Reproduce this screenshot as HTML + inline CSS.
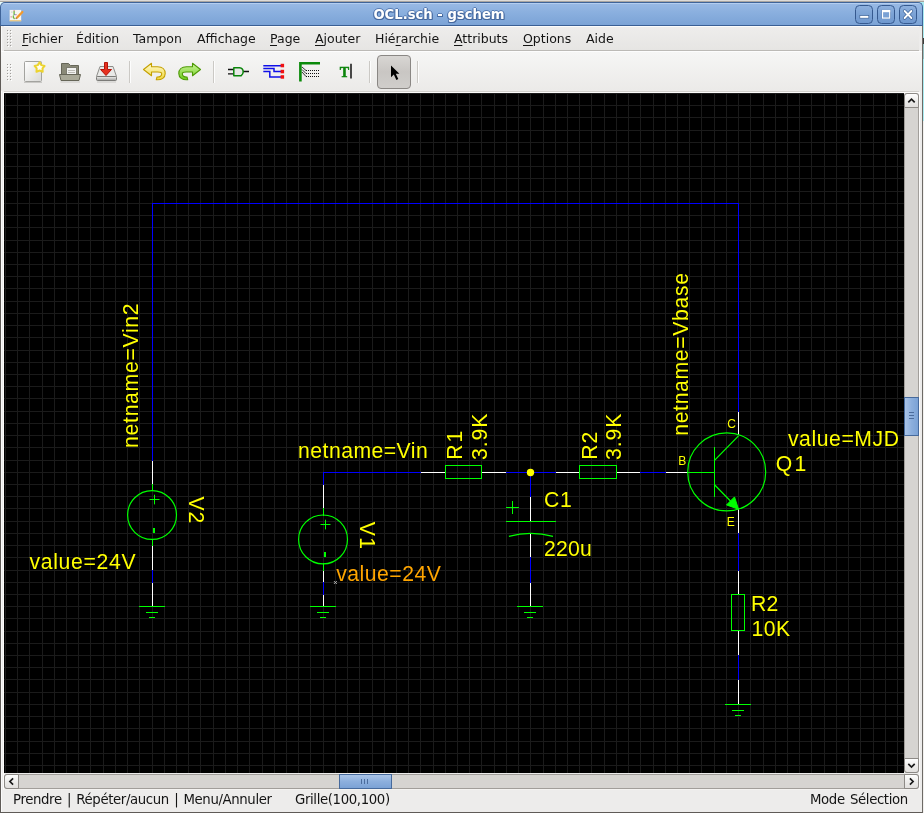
<!DOCTYPE html>
<html><head><meta charset="utf-8"><title>OCL.sch - gschem</title>
<style>
*{box-sizing:border-box;margin:0;padding:0}
html,body{width:924px;height:813px;overflow:hidden;background:#edeceb}
body{position:relative;font-family:"DejaVu Sans","Liberation Sans",sans-serif;font-size:12.5px;color:#141414}
#root{position:absolute;left:0;top:0;width:924px;height:813px;will-change:transform}
.abs{position:absolute}
#topstrip{left:0;top:0;width:924px;height:2px;background:linear-gradient(#dddbd8 0,#dddbd8 50%,#a9a5a0 50%,#a9a5a0 100%)}
#deskL{left:0;top:2px;width:8px;height:8px;background:#e8fdfd}
#deskR{left:918px;top:2px;width:6px;height:119px;background:#a9ecf2}
#rightbg{left:923px;top:121px;width:1px;height:692px;background:#f1f0ee}
#win{left:0;top:20px;width:923px;height:793px;background:#edeceb;border-left:1px solid #5f5b57;border-right:1px solid #6d6a66;border-bottom:1px solid #5f5b57;box-shadow:inset 1px 0 0 #fafafa}
#title{left:0;top:2px;width:923px;height:24px;border-radius:5px 5px 0 0;background:linear-gradient(#b4cef0 0,#b4cef0 1px,#98b9e4 1px,#8bb0df 40%,#7ba3d6 100%);border:1px solid #3f6499;border-bottom-color:#3a5f94}
#title .t{left:-23.5px;width:923px;top:4px;text-align:center;color:#fff;font-weight:bold;font-size:13.2px;text-shadow:0 1px 0 #46699f,1px 1px 0 #46699f,1px 0 0 #4d71a8,-1px 0 0 #5579b0,0 -1px 0 #5a7eb4,-1px 1px 0 #4d71a8}
.wb{top:2px;width:18px;height:19px;border:1px solid #35598f;border-radius:4.5px;background:linear-gradient(#8db0de,#7ba2d5 50%,#6f98cf)}
#menubar{left:4px;top:26px;width:915px;height:25px;background:linear-gradient(#eeedec,#e6e5e3);border-top:1px solid #fbfbfb;border-bottom:1px solid #bcbab6}
#menubar span{position:absolute;top:4px;white-space:nowrap}
#menubar u{text-decoration:underline;text-underline-offset:2px;text-decoration-thickness:1px}
#toolbar{left:1px;top:51px;width:921px;height:40px;background:linear-gradient(#f6f6f5,#ebeae8);border-top:1px solid #fdfdfd}
#tbline{left:4px;top:91px;width:915px;height:2px;background:#d2d0cc;border-bottom:1px solid #fbfbfa}
.sep{width:2px;height:22px;top:61px;background:#cbc9c5;border-right:1px solid #fdfdfd}
#canvas{left:4px;top:93px}
.trough{background:#d6d4d1;border:1px solid #a19e9a}
.sbtn{background:linear-gradient(#fefefe,#ebeae8 60%,#e2e0de);border:1px solid #8d8a86}
.thumb{background:linear-gradient(90deg,#a9c4e8,#8cafdd 50%,#7ba2d5);border:1px solid #466a9c}
.thumbh{background:linear-gradient(#a9c4e8,#8cafdd 50%,#7ba2d5);border:1px solid #466a9c}
#status span{position:absolute;top:792px;white-space:nowrap;font-size:13.3px;letter-spacing:-0.38px;word-spacing:1.4px}
</style></head><body><div id="root">
<div id="topstrip" class="abs"></div>
<div id="deskR" class="abs"></div>
<div id="deskL" class="abs"></div>
<div id="rightbg" class="abs"></div>
<div id="win" class="abs"></div>
<div id="title" class="abs">
  <svg class="abs" style="left:7px;top:6px" width="17" height="14" viewBox="0 0 17 14"><g transform="translate(0.6,0.4)"><rect x="0.300" y="1" width="12.600" height="12" fill="#7f9fcd" opacity="0.500"/><rect x="1" y="0.500" width="11.600" height="11.300" fill="#f6f6f3"/><rect x="1" y="10.800" width="11.600" height="1.100" fill="#e9c274"/><path d="M5.500 2V5M4.700 6.500Q4.300 8 5.600 9.200" stroke="#6fb53e" stroke-width="1.300" fill="none" stroke-linecap="round"/><path d="M5 1.300H6M2 7.500H3.200M7 5.300H8" stroke="#d9556a" stroke-width="0.900"/><path d="M5.500 5.300H7" stroke="#6a78c8" stroke-width="0.900"/><path d="M3.300 2V3.500" stroke="#b9b9b9" stroke-width="0.700"/><path d="M8.300 8.300L13.800 2.600" stroke="#f39a2c" stroke-width="2.300" stroke-linecap="round"/><path d="M7.100 9.500L8 8.500" stroke="#8a7a66" stroke-width="1.100"/></g></svg>
  <div class="abs t">OCL.sch - gschem</div>
  <div class="abs wb" style="left:854px"><svg width="16" height="17"><rect x="3.800" y="9.600" width="9" height="2.600" fill="#fff" stroke="#3f6499" stroke-width="0.7"/></svg></div>
  <div class="abs wb" style="left:876px"><svg width="16" height="17"><rect x="3.6" y="3.800" width="9" height="9" fill="#416aa3"/><rect x="4.500" y="4.500" width="7.200" height="7.600" fill="#7aa1d4" stroke="#fff" stroke-width="1.2"/><rect x="4" y="4" width="8.200" height="2.200" fill="#fff"/></svg></div>
  <div class="abs wb" style="left:898px"><svg width="16" height="17"><path d="M4.600 5L11.400 12M11.400 5L4.600 12" stroke="#3f6499" stroke-width="3.300" stroke-linecap="round"/><path d="M4.600 5L11.400 12M11.400 5L4.600 12" stroke="#fff" stroke-width="1.900" stroke-linecap="round"/></svg></div>
</div>
<div id="menubar" class="abs">
  <span style="left:18px"><u>F</u>ichier</span>
  <span style="left:72px">Édition</span>
  <span style="left:129px">Tampon</span>
  <span style="left:193px">Affichage</span>
  <span style="left:266px"><u>P</u>age</span>
  <span style="left:311px"><u>A</u>jouter</span>
  <span style="left:371px">Hié<u>r</u>archie</span>
  <span style="left:450px"><u>A</u>ttributs</span>
  <span style="left:519px"><u>O</u>ptions</span>
  <span style="left:582px">Aide</span>
</div>
<div id="toolbar" class="abs"></div>
<div id="tbline" class="abs"></div>
<div class="abs" style="left:3px;top:92px;width:917px;height:698px;border:1px solid #fcfbfa;border-bottom-color:#f4f3f1"></div>
<div class="abs" style="left:923px;top:38px;width:1px;height:6px;background:#3a3a3a"></div>
<div class="abs" style="left:923px;top:44px;width:1px;height:15px;background:#97c2c4"></div>
<!-- grips -->
<svg class="abs" style="left:4px;top:26px" width="12" height="60" viewBox="4 26 12 60">
  <g id="gd"><rect x="7" y="30" width="1" height="1" fill="#9f9d9a"/><rect x="8" y="31" width="1" height="1" fill="#fff"/><rect x="10" y="30" width="1" height="1" fill="#9f9d9a"/><rect x="11" y="31" width="1" height="1" fill="#fff"/></g>
  <use href="#gd" y="3"/><use href="#gd" y="6"/><use href="#gd" y="9"/><use href="#gd" y="12"/><use href="#gd" y="15"/>
  <use href="#gd" y="34"/><use href="#gd" y="37"/><use href="#gd" y="40"/><use href="#gd" y="43"/><use href="#gd" y="46"/><use href="#gd" y="49"/>
</svg>
<!-- toolbar icons -->
<svg class="abs" style="left:0;top:51px" width="440" height="41" viewBox="0 51 440 41">
  <defs>
    <linearGradient id="pg" x1="0" y1="0" x2="1" y2="1"><stop offset="0" stop-color="#fff"/><stop offset="1" stop-color="#d9d9d6"/></linearGradient>
    <linearGradient id="dr" x1="0" y1="0" x2="0" y2="1"><stop offset="0" stop-color="#f0f0ee"/><stop offset="1" stop-color="#a2a2a0"/></linearGradient>
    <linearGradient id="yl" x1="0" y1="0" x2="0" y2="1"><stop offset="0" stop-color="#fffbd2"/><stop offset="1" stop-color="#f1d83c"/></linearGradient>
    <linearGradient id="gr" x1="0" y1="0" x2="0" y2="1"><stop offset="0" stop-color="#cdf59c"/><stop offset="1" stop-color="#6ccb1c"/></linearGradient>
    <linearGradient id="pb" x1="0" y1="0" x2="0" y2="1"><stop offset="0" stop-color="#d9d7d4"/><stop offset="0.5" stop-color="#c9c6c3"/><stop offset="1" stop-color="#d0cecb"/></linearGradient>
  </defs>
  <!-- new -->
  <path d="M25.500 61.500H40.500Q41.500 61.500 41.500 62.500V80.500Q41.500 81.500 40.500 81.500H25.500Q24.500 81.500 24.500 80.500V62.500Q24.500 61.500 25.500 61.500Z" fill="url(#pg)" stroke="#a3a39f"/>
  <path d="M24 82.500H42" stroke="#c9c8c5" stroke-width="1"/>
  <path d="M39.6 62.2L41.4 65.1L44.6 65.9L42.5 68.4L42.7 71.8L39.6 70.5L36.5 71.8L36.7 68.4L34.6 65.9L37.8 65.1Z" fill="#fffef2" stroke="#ecd430" stroke-width="2" stroke-linejoin="round"/>
  <!-- open -->
  <path d="M61.500 63.500H68.500L70.500 65.500H78.500V75H61.500Z" fill="#8a8a78" stroke="#666658"/>
  <rect x="66.500" y="67.500" width="10" height="7.500" fill="#f2f2f0" stroke="#7c7c70"/>
  <path d="M68 70.500H75M68 72.500H75" stroke="#bcbcb6" stroke-width="1"/>
  <path d="M59.500 74.500H80.500L79 80.500H61Z" fill="#a9a998" stroke="#666658" stroke-linejoin="round"/>
  <path d="M60.500 82H80" stroke="#c9c8c5" stroke-width="1"/>
  <!-- save -->
  <path d="M100 66.500H113L116.500 76.500H96.500Z" fill="#e9e9e7" stroke="#8d8d8a"/>
  <rect x="96.500" y="76.500" width="20" height="4" rx="1" fill="url(#dr)" stroke="#7b7b78"/>
  <path d="M97 82H116" stroke="#c9c8c5" stroke-width="1"/>
  <path d="M104.500 62.500H107.500V69.500H111.500L106 75.500L100.500 69.500H104.500Z" fill="#e5301f" stroke="#b51208" stroke-width="1" stroke-linejoin="round"/>
  <!-- undo -->
  <path id="ua" d="M143.500 69.500L151.500 63.300V66.800H157.500C162.500 66.800 165.200 69.800 165.200 73.500C165.200 77.600 161.800 80.200 156.300 79.700L157 77C160 77.200 161.700 75.800 161.700 73.700C161.700 72.500 160.500 72 157.500 72H151.500V75.700Z" fill="url(#yl)" stroke="#c4a000" stroke-width="1.100" stroke-linejoin="round"/>
  <!-- redo -->
  <path d="M200.500 69.500L192.500 63.300V66.800H186.500C181.500 66.800 178.800 69.800 178.800 73.500C178.800 77.600 182.200 80.200 187.700 79.700L187 77C184 77.200 182.300 75.800 182.300 73.700C182.300 72.500 183.500 72 186.500 72H192.500V75.700Z" fill="url(#gr)" stroke="#4e9a06" stroke-width="1.100" stroke-linejoin="round"/>
  <!-- component -->
  <path d="M228 69.500H234M228 73.800H234M243 71.500H249" stroke="#111" stroke-width="1.300"/>
  <path d="M233.800 67.800H239.500Q243.200 68.300 243.200 72Q243.200 74 241 75.800H233.800Z" fill="#e9e9e8" stroke="#0a850a" stroke-width="1.500" stroke-linejoin="round"/>
  <!-- net -->
  <path d="M263.300 65.800H281M263.300 68.600H274V71.500H281M263.300 71.500H269.800V77H281" stroke="#1010e8" stroke-width="1.500" fill="none"/>
  <rect x="280.600" y="63.800" width="3.500" height="3.500" fill="#f01010"/><rect x="280.600" y="69.800" width="3.500" height="3.500" fill="#f01010"/><rect x="280.600" y="75.200" width="3.500" height="3.500" fill="#f01010"/>
  <!-- bus -->
  <path d="M300.400 81.400V63.300H320" stroke="#0a8a0a" stroke-width="2.600" fill="none"/>
  <path d="M302 67L306 70.500M302 69.500L306 73.500M302 72L306 76.500" stroke="#222" stroke-width="0.900"/>
  <path d="M306 70.500H320M306 73.500H320M306 76.500H320" stroke="#111" stroke-width="1" stroke-dasharray="1 1" shape-rendering="crispEdges"/>
  <!-- text -->
  <text x="339.700" y="76.800" font-family="'Liberation Serif',serif" font-weight="bold" font-size="15.300" textLength="9.4" lengthAdjust="spacingAndGlyphs" fill="#0a840a" stroke="#0a840a" stroke-width="0.500">T</text>
  <path d="M351 63.700V78.400" stroke="#000" stroke-width="1.400"/>
  <!-- select (pressed) -->
  <rect x="377.500" y="55.500" width="33" height="33" rx="3.500" fill="url(#pb)" stroke="#8a8784"/>
  <path d="M391 65.500V77.200L393.800 74.600L396.400 80L398.300 79.100L395.800 73.800H399.400Z" fill="#000"/>
</svg>
<div class="abs sep" style="left:129px"></div>
<div class="abs sep" style="left:213px"></div>
<div class="abs sep" style="left:369px"></div>
<div class="abs sep" style="left:417px"></div>

<svg id="canvas" class="abs" width="900" height="680" viewBox="4 93 900 680" font-family="'Liberation Sans',sans-serif">
<rect x="4" y="93" width="900" height="680" fill="#000"/>
<path d="M5.5 93V773M17.5 93V773M29.5 93V773M42.5 93V773M54.5 93V773M66.5 93V773M78.5 93V773M90.5 93V773M103.5 93V773M115.5 93V773M127.5 93V773M139.5 93V773M152.5 93V773M164.5 93V773M176.5 93V773M188.5 93V773M200.5 93V773M213.5 93V773M225.5 93V773M237.5 93V773M249.5 93V773M262.5 93V773M274.5 93V773M286.5 93V773M298.5 93V773M310.5 93V773M323.5 93V773M335.5 93V773M347.5 93V773M359.5 93V773M372.5 93V773M384.5 93V773M396.5 93V773M408.5 93V773M420.5 93V773M433.5 93V773M445.5 93V773M457.5 93V773M469.5 93V773M481.5 93V773M494.5 93V773M506.5 93V773M518.5 93V773M530.5 93V773M543.5 93V773M555.5 93V773M567.5 93V773M579.5 93V773M591.5 93V773M604.5 93V773M616.5 93V773M628.5 93V773M640.5 93V773M653.5 93V773M665.5 93V773M677.5 93V773M689.5 93V773M701.5 93V773M714.5 93V773M726.5 93V773M738.5 93V773M750.5 93V773M763.5 93V773M775.5 93V773M787.5 93V773M799.5 93V773M811.5 93V773M824.5 93V773M836.5 93V773M848.5 93V773M860.5 93V773M873.5 93V773M885.5 93V773M897.5 93V773M4 93.5H904M4 105.5H904M4 117.5H904M4 130.5H904M4 142.5H904M4 154.5H904M4 166.5H904M4 178.5H904M4 191.5H904M4 203.5H904M4 215.5H904M4 227.5H904M4 240.5H904M4 252.5H904M4 264.5H904M4 276.5H904M4 288.5H904M4 301.5H904M4 313.5H904M4 325.5H904M4 337.5H904M4 350.5H904M4 362.5H904M4 374.5H904M4 386.5H904M4 398.5H904M4 411.5H904M4 423.5H904M4 435.5H904M4 447.5H904M4 460.5H904M4 472.5H904M4 484.5H904M4 496.5H904M4 508.5H904M4 521.5H904M4 533.5H904M4 545.5H904M4 557.5H904M4 570.5H904M4 582.5H904M4 594.5H904M4 606.5H904M4 618.5H904M4 631.5H904M4 643.5H904M4 655.5H904M4 667.5H904M4 679.5H904M4 692.5H904M4 704.5H904M4 716.5H904M4 728.5H904M4 741.5H904M4 753.5H904M4 765.5H904" stroke="#1b1b1b" stroke-width="1" fill="none" shape-rendering="crispEdges"/>
<g fill="none" stroke-width="1" shape-rendering="crispEdges">
<path stroke="#fff" d="M152.5 460V484M152.5 545V570M152.5 582V606M323.5 484V508M323.5 570V594M323.5 582V606M420 472.5H445M481 472.5H506M555 472.5H579M616 472.5H640M665 472.5H687.8M530.5 496V521M530.5 533V557M530.5 582V606M738.5 411V435M738.5 508V533M738.5 570V594M738.5 631V655M738.5 679V704"/>
<path stroke="#0000ff" d="M152.5 461V203.5H738.5V412M152.5 570V583M323.5 485V472.5H421M323.5 582V595M506 472.5H556M530.5 472V497M530.5 557V583M640 472.5H666M738.5 533V571M738.5 655V680"/>
</g>
<g fill="none" stroke="#00ff00" stroke-width="1">
<circle stroke-width="1.2" cx="152.05" cy="515.02" r="24.44"/>
<path shape-rendering="crispEdges" d="M152.5 484V491.08M152.5 538.96V546"/>
<path d="M149.5 499.5H159.5M154.5 494.7V504.4"/>
<rect x="153" y="528" width="2" height="5" fill="#00ff00" stroke="none"/>
<circle stroke-width="1.2" cx="323.05" cy="539.46" r="24.44"/>
<path shape-rendering="crispEdges" d="M323.5 508V515.52M323.5 563.4V571"/>
<path d="M320.5 524.5H330.5M325.5 519.7V529.4"/>
<rect x="324" y="552" width="2" height="5" fill="#00ff00" stroke="none"/>
<path shape-rendering="crispEdges" d="M139 606.5H165M146 612.5H158M149 617.5H155"/>
<path shape-rendering="crispEdges" d="M310 606.5H336M317 612.5H329M320 617.5H326"/>
<path shape-rendering="crispEdges" d="M517 606.5H543M524 612.5H536M527 617.5H533"/>
<path shape-rendering="crispEdges" d="M725 704.5H751M732 710.5H744M735 715.5H741"/>
<rect shape-rendering="crispEdges" x="445.5" y="465.5" width="36" height="13"/>
<rect shape-rendering="crispEdges" x="579.5" y="465.5" width="37" height="13"/>
<rect shape-rendering="crispEdges" x="731.5" y="594.5" width="13" height="36"/>
<path shape-rendering="crispEdges" d="M506 521.5H556M506 507.5H519M512.5 501V514"/>
<path stroke-width="1.25" d="M508.9 536.4Q530.5 530.5 553 536.4"/>
<circle stroke-width="1.2" cx="726.7" cy="471.95" r="39"/>
<path shape-rendering="crispEdges" d="M687.6 472.5H714.5M714.5 447V497"/>
<path stroke-width="1.25" d="M714.5 460.33L738.5 435.89M714.5 484.77L738.5 509.21"/>
<path fill="#00ff00" d="M738.5 509.21L726.5 504.91L734.5 496.91Z"/>
</g>
<circle cx="530.5" cy="472.5" r="3.7" fill="#ffff00"/>
<text font-size="21.2" fill="#ffff00" textLength="144.56" lengthAdjust="spacing" transform="translate(138.3,447.92) rotate(-90)">netname=Vin2</text>
<text font-size="21.2" fill="#ffff00" textLength="26.72" lengthAdjust="spacing" transform="translate(188.93,496.59) rotate(90)">V2</text>
<text font-size="21.2" fill="#ffff00" textLength="106.04" lengthAdjust="spacing" x="29.52" y="568.73">value=24V</text>
<text font-size="21.2" fill="#ffff00" textLength="129.63" lengthAdjust="spacing" x="298.08" y="458.44">netname=Vin</text>
<text font-size="21.2" fill="#ffff00" textLength="27.17" lengthAdjust="spacing" transform="translate(359.71,521.78) rotate(90)">V1</text>
<text font-size="21.2" fill="#ffff00" textLength="29.03" lengthAdjust="spacing" transform="translate(462.29,459.8) rotate(-90)">R1</text>
<text font-size="21.2" fill="#ffff00" textLength="46.47" lengthAdjust="spacing" transform="translate(486.82,460.04) rotate(-90)">3.9K</text>
<text font-size="21.2" fill="#ffff00" textLength="28.08" lengthAdjust="spacing" transform="translate(597.26,459.8) rotate(-90)">R2</text>
<text font-size="21.2" fill="#ffff00" textLength="46.47" lengthAdjust="spacing" transform="translate(620.92,460.04) rotate(-90)">3.9K</text>
<text font-size="21.2" fill="#ffff00" textLength="28.03" lengthAdjust="spacing" x="543.88" y="506.92">C1</text>
<text font-size="21.2" fill="#ffff00" textLength="47.8" lengthAdjust="spacing" x="543.88" y="555.89">220u</text>
<text font-size="21.2" fill="#ffff00" textLength="162.84" lengthAdjust="spacing" transform="translate(688.46,435.78) rotate(-90)">netname=Vbase</text>
<text font-size="21.2" fill="#ffff00" textLength="30.46" lengthAdjust="spacing" x="775.86" y="470.8">Q1</text>
<text font-size="21.2" fill="#ffff00" textLength="111.11" lengthAdjust="spacing" x="787.94" y="446.04">value=MJD</text>
<text font-size="21.2" fill="#ffff00" textLength="27.27" lengthAdjust="spacing" x="750.99" y="610.9">R2</text>
<text font-size="21.2" fill="#ffff00" textLength="38.76" lengthAdjust="spacing" x="751.43" y="635.68">10K</text>
<text font-size="21.2" fill="#ffa500" textLength="104.64" lengthAdjust="spacing" x="336.23" y="580.94">value=24V</text>
<text font-size="12" fill="#ffff00" x="727.19" y="427.86">C</text>
<text font-size="12" fill="#ffff00" x="678.15" y="465.05">B</text>
<text font-size="12" fill="#ffff00" x="726.79" y="525.95">E</text>
<path d="M333.9 581L336.9 584M336.9 581L333.9 584" stroke="#c8c8c8" stroke-width="0.8"/>
</svg>

<!-- scrollbars -->
<div class="abs trough" style="left:904px;top:93px;width:15px;height:680px;border-radius:3px"></div>
<div class="abs sbtn" style="left:904px;top:93px;width:15px;height:15px;border-radius:3px 3px 0 0"><svg width="13" height="13"><path d="M3.300 8.300L6.500 5.100L9.700 8.300" fill="none" stroke="#1a1a1a" stroke-width="1.700"/></svg></div>
<div class="abs sbtn" style="left:904px;top:758px;width:15px;height:15px;border-radius:0 0 3px 3px"><svg width="13" height="13"><path d="M3.300 4.900L6.500 8.100L9.700 4.900" fill="none" stroke="#1a1a1a" stroke-width="1.700"/></svg></div>
<div class="abs thumb" style="left:904px;top:397px;width:15px;height:39px"><svg width="13" height="37"><path d="M4 14.500H9M4 17.500H9M4 20.500H9" stroke="#4b6c9c" stroke-width="1"/></svg></div>
<div class="abs trough" style="left:4px;top:774px;width:915px;height:15px;border-radius:3px"></div>
<div class="abs sbtn" style="left:4px;top:774px;width:15px;height:15px;border-radius:3px 0 0 3px"><svg width="13" height="13"><path d="M8.100 3.300L4.900 6.500L8.100 9.700" fill="none" stroke="#1a1a1a" stroke-width="1.700"/></svg></div>
<div class="abs sbtn" style="left:904px;top:774px;width:15px;height:15px;border-radius:0 3px 3px 0"><svg width="13" height="13"><path d="M4.900 3.300L8.100 6.500L4.900 9.700" fill="none" stroke="#1a1a1a" stroke-width="1.700"/></svg></div>
<div class="abs thumbh" style="left:339px;top:774px;width:53px;height:15px"><svg width="51" height="13"><path d="M21.500 4V9M24.500 4V9M27.500 4V9" stroke="#4b6c9c" stroke-width="1"/></svg></div>
<div id="status">
 <span style="left:13px">Prendre | Répéter/aucun | Menu/Annuler</span>
 <span style="left:295px">Grille(100,100)</span>
 <span style="left:810px">Mode Sélection</span>
</div>
</div></body></html>
